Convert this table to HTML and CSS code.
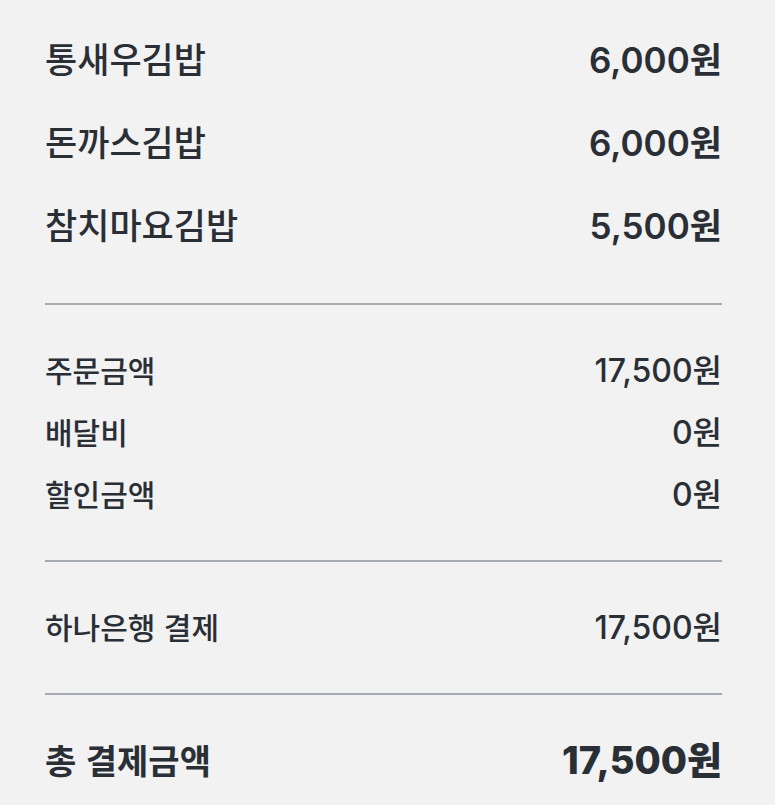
FILE: index.html
```html
<!DOCTYPE html>
<html lang="ko">
<head>
<meta charset="utf-8">
<link rel="stylesheet" href="styles.css">
</head>
<body>
<main class="receipt">
  <section class="block items">
    <div class="row"><span class="label">통새우김밥</span><span class="amount">6,000원</span></div>
    <div class="row"><span class="label">돈까스김밥</span><span class="amount">6,000원</span></div>
    <div class="row"><span class="label">참치마요김밥</span><span class="amount">5,500원</span></div>
  </section>
  <section class="block details">
    <div class="row"><span class="label">주문금액</span><span class="amount">17,500원</span></div>
    <div class="row"><span class="label">배달비</span><span class="amount">0원</span></div>
    <div class="row"><span class="label">할인금액</span><span class="amount">0원</span></div>
  </section>
  <section class="block details">
    <div class="row"><span class="label">하나은행 결제</span><span class="amount">17,500원</span></div>
  </section>
  <section class="block total">
    <div class="row"><span class="label">총 결제금액</span><span class="amount">17,500원</span></div>
  </section>
</main>
</body>
</html>
```

FILE: styles.css
```css
html, body {
  margin: 0;
  padding: 0;
  background: #f2f2f2;
}
body {
  font-family: "Inter", "Noto Sans CJK KR", sans-serif;
  color: #2a2e35;
}
.receipt {
  padding: 0 53px 0 45px;
}
.block {
  border-bottom: 2px solid #a6aab1;
  padding: 33px 0 36px;
}
.block:last-child {
  border-bottom: none;
}
.row {
  display: flex;
  justify-content: space-between;
  align-items: baseline;
}
.label {
  font-family: "Noto Sans CJK KR", sans-serif;
}
.items {
  padding-top: 16px;
  padding-bottom: 38px;
}
.items .row {
  height: 83px;
  line-height: 83px;
}
.items .label { font-size: 35px; font-weight: 500; }
.items .amount { font-size: 35px; font-weight: 600; }
.details .row {
  height: 62px;
  line-height: 62px;
}
.details .label { font-size: 30px; font-weight: 500; }
.details .amount { font-size: 32px; font-weight: 500; }
.total {
  padding-top: 34px;
}
.total .row {
  height: 62px;
  line-height: 62px;
}
.total .label { font-size: 34px; font-weight: 700; }
.total .amount { font-size: 38px; font-weight: 800; }
```
